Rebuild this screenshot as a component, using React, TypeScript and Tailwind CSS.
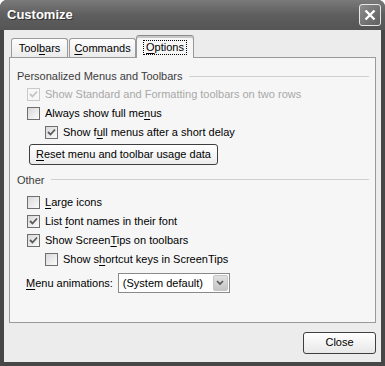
const font = { fontFamily: '"Liberation Sans", Arial, sans-serif' }

const U = ({ children }: { children: string }) => <span className="underline underline-offset-[2px]">{children}</span>

const Check = ({ checked, disabled }: { checked?: boolean; disabled?: boolean }) => (
    <span
        className={`flex h-[13px] w-[13px] shrink-0 items-center justify-center border ${
            disabled ? 'border-[#c9c9c9] bg-[#f7f7f7]' : 'border-[#6f6f6f] bg-gradient-to-br from-[#d9d9d9] to-[#fbfbfb]'
        }`}
    >
        {checked && (
            <svg width="9" height="9" viewBox="0 0 9 9">
                <path
                    d="M1 4 L3.5 6.5 L8 1.5"
                    fill="none"
                    stroke={disabled ? '#c4c4c4' : '#5c5c5c'}
                    strokeWidth="1.8"
                />
            </svg>
        )}
    </span>
)

const Row = ({
    children,
    checked,
    disabled,
    indent,
}: {
    children: React.ReactNode
    checked?: boolean
    disabled?: boolean
    indent?: boolean
}) => (
    <div className={`flex h-[19px] items-center gap-[5px] ${indent ? 'pl-[28px]' : 'pl-[10px]'}`}>
        <Check checked={checked} disabled={disabled} />
        <span className={disabled ? 'text-[#a8a8a8]' : 'text-black'}>{children}</span>
    </div>
)

const Group = ({ title }: { title: string }) => (
    <div className="flex items-center gap-[6px] pr-[6px]">
        <span className="text-[#3c3c3c]">{title}</span>
        <span className="h-px flex-1 bg-[#cfcfcf]" />
    </div>
)

export default function App() {
    return (
        <div
            className="flex h-[366px] w-[385px] flex-col overflow-hidden rounded-t-[7px] bg-[#474747] text-[11px]"
            style={font}
        >
            <div className="flex h-[30px] shrink-0 items-center justify-between bg-gradient-to-b from-[#7a7a7a] via-[#5e5e5e] to-[#555555] pl-[7px] pr-[4px]">
                <span className="text-[13px] font-bold text-white [text-shadow:1px_1px_0_#333]">Customize</span>
                <span className="flex h-[22px] w-[22px] items-center justify-center rounded-[3px] border border-[#e8e8e8] bg-gradient-to-br from-[#8c8c8c] to-[#606060]">
                    <svg width="12" height="12" viewBox="0 0 12 12">
                        <path d="M1.5 1.5 L10.5 10.5 M10.5 1.5 L1.5 10.5" stroke="white" strokeWidth="2.4" />
                    </svg>
                </span>
            </div>

            <div className="mx-[4px] mb-[4px] flex flex-1 flex-col bg-[#ececec] px-[5px] pt-[4px]">
                <div className="flex h-[23px] items-end pl-[2px]">
                    <div className="flex h-[19px] w-[57px] items-center justify-center rounded-t-[3px] border border-b-0 border-[#9a9a9a] bg-gradient-to-b from-[#fdfdfd] to-[#ebebeb]">
                        Tool<U>b</U>ars
                    </div>
                    <div className="ml-[1px] flex h-[19px] w-[67px] items-center justify-center rounded-t-[3px] border border-b-0 border-[#9a9a9a] bg-gradient-to-b from-[#fdfdfd] to-[#ebebeb]">
                        <U>C</U>ommands
                    </div>
                    <div className="relative z-10 -mb-px flex h-[23px] w-[58px] items-center justify-center rounded-t-[3px] border border-b-0 border-[#9a9a9a] border-t-[#8a8a8a] bg-[#f6f6f6] shadow-[inset_0_2px_0_#c8c8c8]">
                        <span className="border border-dotted border-black px-[2px] leading-[13px]">
                            <U>O</U>ptions
                        </span>
                    </div>
                </div>

                <div className="flex h-[266px] flex-col border border-[#9a9a9a] bg-[#f6f6f6] pl-[7px] pt-[10px]">
                    <Group title="Personalized Menus and Toolbars" />
                    <div>
                        <Row checked disabled>
                            Show Standard and Formatting toolbars on two rows
                        </Row>
                        <Row>
                            Always show full me<U>n</U>us
                        </Row>
                        <Row checked indent>
                            Show f<U>u</U>ll menus after a short delay
                        </Row>
                    </div>
                    <div className="pl-[12px] pt-[2px]">
                        <button className="h-[21px] w-[189px] rounded-[3px] border border-[#3f3f3f] bg-gradient-to-b from-[#ffffff] to-[#ececec] text-black">
                            <U>R</U>eset menu and toolbar usage data
                        </button>
                    </div>
                    <div className="mt-[7px]">
                        <Group title="Other" />
                    </div>
                    <div className="mt-[5px]">
                        <Row>
                            <U>L</U>arge icons
                        </Row>
                        <Row checked>
                            List <U>f</U>ont names in their font
                        </Row>
                        <Row checked>
                            Show Screen<U>T</U>ips on toolbars
                        </Row>
                        <Row indent>
                            Show s<U>h</U>ortcut keys in ScreenTips
                        </Row>
                    </div>
                    <div className="mt-[4px] flex items-center gap-[5px] pl-[9px]">
                        <span>
                            <U>M</U>enu animations:
                        </span>
                        <div className="flex h-[20px] w-[112px] items-center border border-[#8a8a8a] bg-white pl-[4px] pr-px">
                            <span className="flex-1">(System default)</span>
                            <span className="flex h-[16px] w-[15px] items-center justify-center rounded-[2px] border border-[#c4c4c4] bg-gradient-to-b from-[#e2e2e2] to-[#c4c4c4]">
                                <svg width="8" height="6" viewBox="0 0 8 6">
                                    <path d="M1 1 L4 4 L7 1" fill="none" stroke="#555" strokeWidth="1.6" />
                                </svg>
                            </span>
                        </div>
                    </div>
                </div>

                <div className="flex flex-1 items-center justify-end">
                    <button className="h-[22px] w-[73px] rounded-[3px] border border-[#3f3f3f] bg-gradient-to-b from-[#ffffff] to-[#e8e8e8] text-black">
                        Close
                    </button>
                </div>
            </div>
        </div>
    )
}
